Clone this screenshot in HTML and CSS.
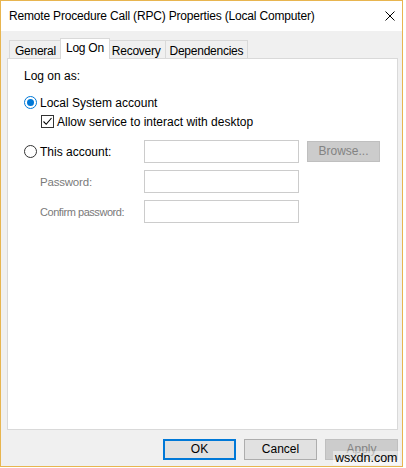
FILE: index.html
```html
<!DOCTYPE html>
<html lang="en">
<head>
  <meta charset="UTF-8" />
  <title>Remote Procedure Call (RPC) Properties (Local Computer)</title>
  <link rel="stylesheet" href="styles.css">
</head>
<body>
  <div class="window">
    <div class="titlebar">
      <span class="title">Remote Procedure Call (RPC) Properties (Local Computer)</span>
      <svg class="close" width="10" height="10" viewBox="0 0 10 10">
        <path d="M0.5 0.5 L9.5 9.5 M9.5 0.5 L0.5 9.5" stroke="#000" stroke-width="1" fill="none"/>
      </svg>
    </div>

    <div class="client">
      <div class="tabs">
        <div class="tab">General</div>
        <div class="tab active">Log On</div>
        <div class="tab">Recovery</div>
        <div class="tab">Dependencies</div>
      </div>

      <div class="panel">
        <div class="caption">Log on as:</div>

        <div class="option">
          <span class="radio checked"></span>
          <span>Local System account</span>
        </div>
        <div class="option check-row">
          <span class="checkbox">
            <svg width="11" height="11" viewBox="0 0 11 11">
              <path d="M1.5 5.5 L4.2 8.3 L9.5 2" stroke="#000" stroke-width="1.1" fill="none"/>
            </svg>
          </span>
          <span>Allow service to interact with desktop</span>
        </div>

        <div class="account-grid">
          <div class="option">
            <span class="radio"></span>
            <span>This account:</span>
          </div>
          <div class="field"></div>
          <div class="btn disabled">Browse...</div>

          <div class="sub-label">Password:</div>
          <div class="field"></div>
          <div></div>

          <div class="sub-label narrow">Confirm password:</div>
          <div class="field"></div>
          <div></div>
        </div>
      </div>

      <div class="buttons">
        <div class="btn default">OK</div>
        <div class="btn">Cancel</div>
        <div class="btn disabled">Apply</div>
      </div>
    </div>

    <div class="watermark">wsxdn.com</div>
  </div>
</body>
</html>
```

FILE: styles.css
```css
body {
  margin: 0;
  background: #fff;
  font-family: "Liberation Sans", Arial, sans-serif;
  font-size: 12px;
  color: #000;
}
.window {
  position: relative;
  width: 403px;
  height: 467px;
  box-sizing: border-box;
  border: 1px solid #e8b54f;
  display: flex;
  flex-direction: column;
}
.titlebar {
  height: 30px;
  background: #fff;
  display: flex;
  align-items: center;
  justify-content: space-between;
  padding-left: 8px;
}
.title {
  line-height: 15px;
  padding-top: 1px;
  letter-spacing: -0.18px;
}
.close {
  margin-right: 7px;
}
.client {
  flex: 1;
  background: #f0f0f0;
  padding: 7px 4px 0 6px;
}
.tabs {
  display: flex;
  align-items: flex-end;
  height: 21px;
  padding-left: 2px;
  margin-bottom: -1px;
}
.tab {
  height: 18px;
  line-height: 18px;
  box-sizing: border-box;
  padding: 1px 4px 0 4px;
  border: 1px solid #d9d9d9;
  border-bottom: none;
  margin-bottom: 1px;
  margin-left: -1px;
  background: #f0f0f0;
  letter-spacing: -0.25px;
  white-space: nowrap;
}
.tab:first-child {
  margin-left: 0;
  padding: 1px 5px 0 5px;
}
.tab.active {
  position: relative;
  z-index: 1;
  height: 21px;
  line-height: 18px;
  padding: 0 5px;
  margin: 0 -2px 0 -2px;
  background: #fff;
}
.panel {
  height: 372px;
  box-sizing: border-box;
  background: #fff;
  border: 1px solid #d9d9d9;
  padding: 10px 16px;
}
.caption {
  line-height: 15px;
}
.option {
  display: flex;
  align-items: center;
  gap: 3px;
  height: 15px;
  margin-top: 11px;
  white-space: nowrap;
}
.check-row {
  margin-top: 4px;
  padding-left: 17px;
  gap: 3px;
}
.radio {
  width: 13px;
  height: 13px;
  box-sizing: border-box;
  border: 1px solid #333;
  border-radius: 50%;
  display: flex;
  align-items: center;
  justify-content: center;
  flex: none;
}
.radio.checked {
  border-color: #0078d7;
}
.radio.checked::after {
  content: "";
  width: 7px;
  height: 7px;
  border-radius: 50%;
  background: #0078d7;
}
.checkbox {
  width: 13px;
  height: 13px;
  box-sizing: border-box;
  border: 1px solid #333;
  display: flex;
  align-items: center;
  justify-content: center;
  flex: none;
}
.account-grid {
  display: grid;
  grid-template-columns: 112px 155px 73px;
  grid-template-rows: 23px 23px 23px;
  column-gap: 8px;
  row-gap: 7px;
  align-items: center;
  margin-top: 11px;
}
.account-grid .option {
  margin-top: 0;
}
.sub-label {
  padding-left: 16px;
  color: #7a7a7a;
  white-space: nowrap;
  font-size: 11.5px;
  letter-spacing: -0.2px;
}
.sub-label.narrow {
  font-size: 11px;
  letter-spacing: -0.45px;
}
.field {
  height: 23px;
  box-sizing: border-box;
  border: 1px solid #cccccc;
  background: #fff;
}
.btn {
  width: 73px;
  height: 21px;
  box-sizing: border-box;
  border: 1px solid #adadad;
  background: #e1e1e1;
  text-align: center;
  line-height: 19px;
}
.btn.default {
  border: 2px solid #0078d7;
  line-height: 17px;
}
.btn.disabled {
  background: #cccccc;
  border-color: #bfbfbf;
  color: #838383;
}
.buttons {
  display: flex;
  justify-content: flex-end;
  gap: 8px;
  margin-top: 9px;
}
.watermark {
  position: absolute;
  left: 332px;
  top: 450px;
  padding: 0 2px;
  font-size: 12.5px;
  line-height: 14px;
  color: #000;
  background: rgba(255, 255, 255, 0.45);
}
```
